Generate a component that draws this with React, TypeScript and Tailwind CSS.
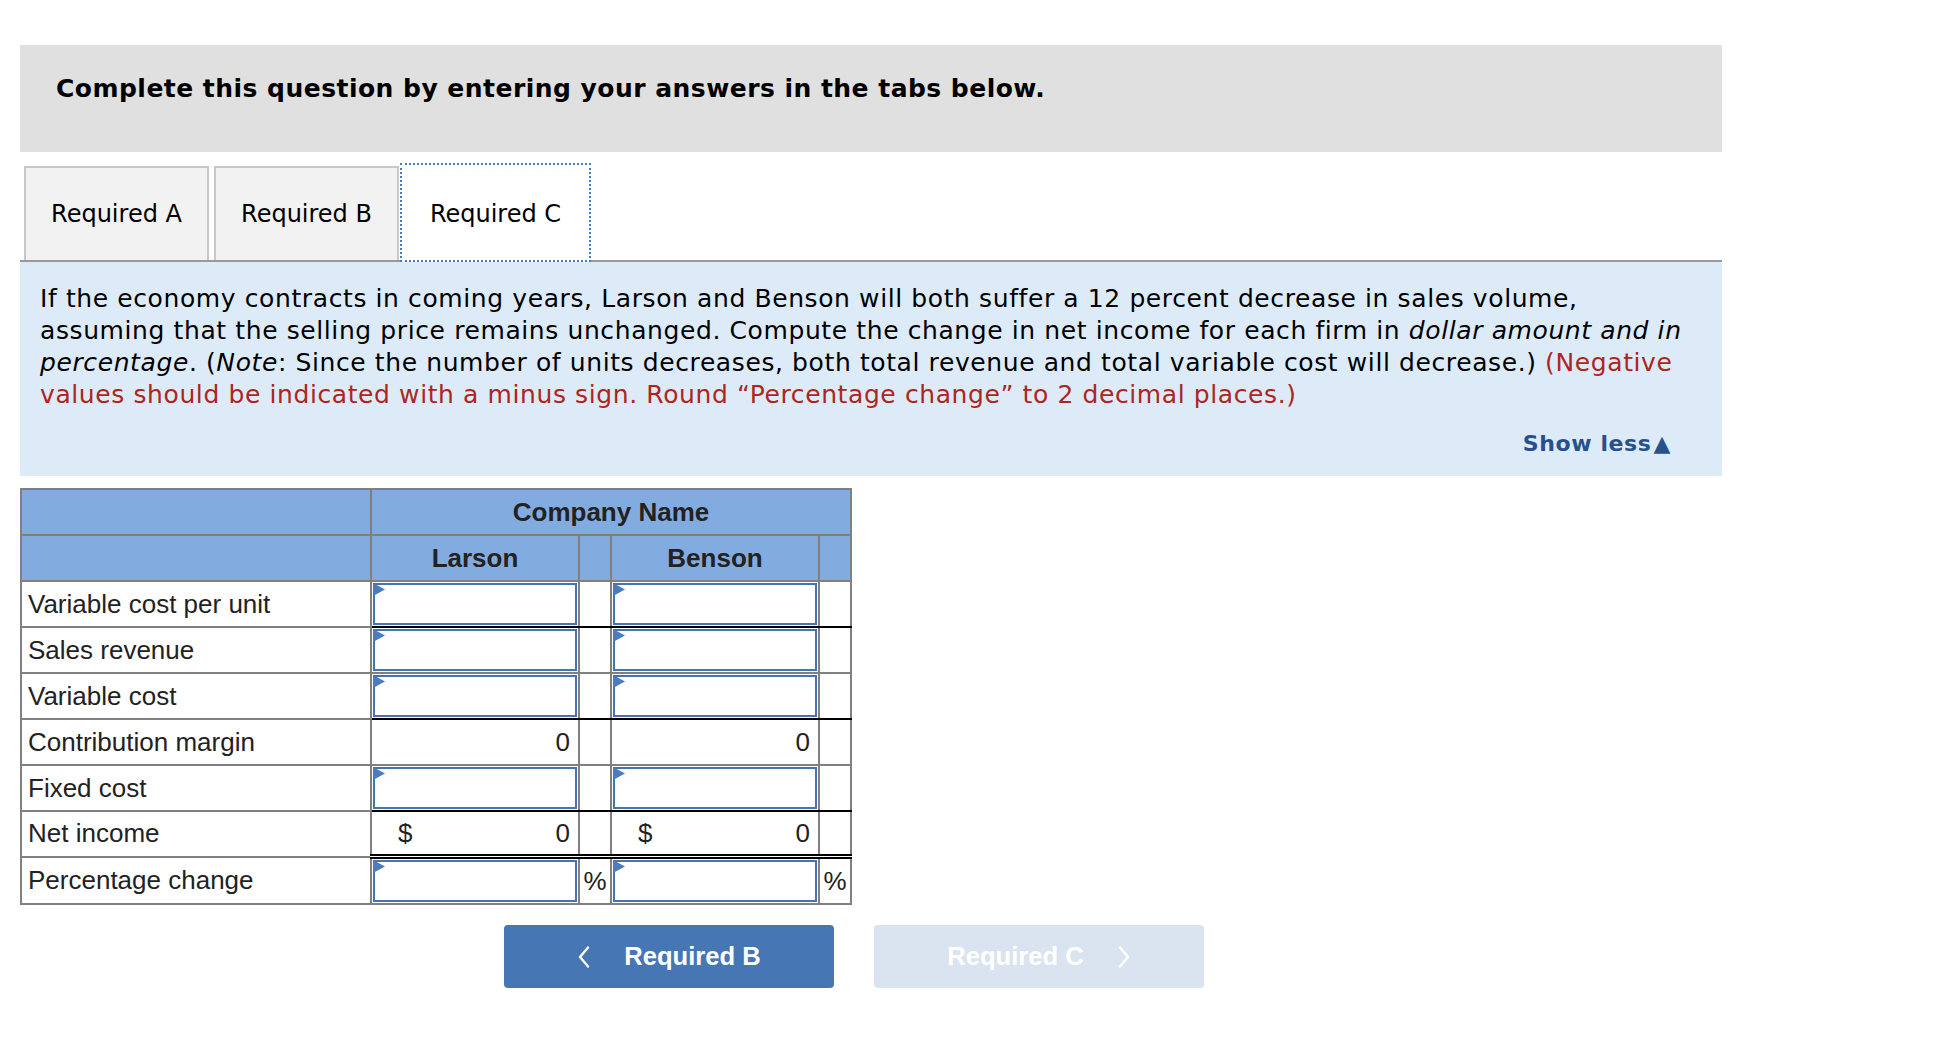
import React from "react";

type Row = {
  label: string;
  kind: "input" | "value" | "dollar";
  pct?: boolean;
  sep: "black" | "gray" | "double";
};

const rows: Row[] = [
  { label: "Variable cost per unit", kind: "input", sep: "black" },
  { label: "Sales revenue", kind: "input", sep: "gray" },
  { label: "Variable cost", kind: "input", sep: "black" },
  { label: "Contribution margin", kind: "value", sep: "gray" },
  { label: "Fixed cost", kind: "input", sep: "black" },
  { label: "Net income", kind: "dollar", sep: "double" },
  { label: "Percentage change", kind: "input", pct: true, sep: "gray" },
];

function InputBox() {
  return (
    <div className="relative h-[42px] border-2 border-[#4673b2] bg-white">
      <svg className="absolute -left-[2px] -top-[2px]" width="12" height="13" viewBox="0 0 12 13">
        <polygon points="0,0 12,6.5 0,13" fill="#4a7cc2" />
      </svg>
    </div>
  );
}

function sepClass(sep: Row["sep"]) {
  if (sep === "black") return "border-b-black";
  if (sep === "double") return "border-b-[5px] border-b-black [border-bottom-style:double]";
  return "";
}

function Chevron({ dir }: { dir: "left" | "right" }) {
  return (
    <svg width="14" height="22" viewBox="0 0 14 22" fill="none">
      <polyline
        points={dir === "left" ? "11,1.5 3,11 11,20.5" : "3,1.5 11,11 3,20.5"}
        stroke="white"
        strokeWidth="2.4"
        strokeLinecap="round"
        strokeLinejoin="round"
      />
    </svg>
  );
}

export default function App() {
  const td = "border-2 border-[#808080] p-0";

  return (
    <div className="min-h-screen bg-white pl-5 pt-[45px] font-['DejaVu_Sans',sans-serif] text-black">
      <div className="w-[1702px]">
        {/* header */}
        <div className="h-[107px] bg-[#e0e0e0] pl-[36px] pt-[28px]">
          <p className="text-[25px] font-bold leading-[32px] tracking-[0.47px]">
            Complete this question by entering your answers in the tabs below.
          </p>
        </div>

        {/* tabs */}
        <div className="mt-[14px] flex items-end border-b-2 border-[#999999] pl-[4px]">
          <div className="flex h-[94px] w-[185px] items-center justify-center border-2 border-b-0 border-[#c8c8c8] bg-[#f2f2f2] text-[24px]">
            Required A
          </div>
          <div className="ml-[5px] flex h-[94px] w-[185px] items-center justify-center border-2 border-b-0 border-[#c8c8c8] bg-[#f2f2f2] text-[24px]">
            Required B
          </div>
          <div className="relative -mb-[2px] -mt-[3px] ml-px flex h-[99px] w-[191px] items-center justify-center border-2 border-dotted border-[#4a78c2] bg-white pt-[3px] text-[24px]">
            Required C
          </div>
        </div>

        {/* instructions */}
        <div className="bg-[#ddebf8] pb-[16px] pl-[20px] pr-[30px] pt-[21px]">
          <p className="text-[25px] leading-[32px] tracking-[0.6px]">
            If the economy contracts in coming years, Larson and Benson will both suffer a 12 percent decrease in sales
            volume, assuming that the selling price remains unchanged. Compute the change in net income for each firm in{" "}
            <i>dollar amount and in percentage</i>. (<i>Note</i>: Since the number of units decreases, both total revenue
            and total variable cost will decrease.){" "}
            <span className="text-[#ae2520]">
              (Negative values should be indicated with a minus sign. Round “Percentage change” to 2 decimal places.)
            </span>
          </p>
          <div className="mt-[17px] flex justify-end pr-[21px]">
            <span className="text-[22px] font-bold leading-[32px] tracking-[0.6px] text-[#27508c]">
              Show less<span className="ml-[2px]">▲</span>
            </span>
          </div>
        </div>

        {/* table */}
        <table className="mt-[12px] w-[832px] table-fixed border-collapse font-['Liberation_Sans',Arial,sans-serif] text-[26px] text-[#222222]">
          <colgroup>
            <col className="w-[350px]" />
            <col className="w-[208px]" />
            <col className="w-[32px]" />
            <col className="w-[208px]" />
            <col className="w-[32px]" />
          </colgroup>
          <thead>
            <tr className="bg-[#82abdf]">
              <td className={td}>
                <div className="h-[44px]" />
              </td>
              <td className={td} colSpan={4}>
                <div className="flex h-[44px] items-center justify-center font-bold">Company Name</div>
              </td>
            </tr>
            <tr className="bg-[#82abdf]">
              <td className={td}>
                <div className="h-[44px]" />
              </td>
              <td className={td}>
                <div className="flex h-[44px] items-center justify-center font-bold">Larson</div>
              </td>
              <td className={td} />
              <td className={td}>
                <div className="flex h-[44px] items-center justify-center font-bold">Benson</div>
              </td>
              <td className={td} />
            </tr>
          </thead>
          <tbody>
            {rows.map((r) => {
              const sep = sepClass(r.sep);
              const h = r.sep === "double" ? "h-[42px]" : "h-[44px]";
              const valueCell = () => {
                if (r.kind === "input")
                  return (
                    <div className="p-px">
                      <InputBox />
                    </div>
                  );
                if (r.kind === "value")
                  return <div className={`flex ${h} items-center justify-end pr-[8px]`}>0</div>;
                return (
                  <div className={`flex ${h} items-center justify-between pl-[26px] pr-[8px]`}>
                    <span>$</span>
                    <span>0</span>
                  </div>
                );
              };
              return (
                <tr key={r.label} className="bg-white">
                  <td className={td}>
                    <div className={`flex ${h} items-center pl-[6px]`}>{r.label}</div>
                  </td>
                  <td className={`${td} ${sep}`}>{valueCell()}</td>
                  <td className={`${td} ${sep}`}>
                    {r.pct && <div className="flex h-[44px] items-center justify-center">%</div>}
                  </td>
                  <td className={`${td} ${sep}`}>{valueCell()}</td>
                  <td className={`${td} ${sep}`}>
                    {r.pct && <div className="flex h-[44px] items-center justify-center">%</div>}
                  </td>
                </tr>
              );
            })}
          </tbody>
        </table>

        {/* nav buttons */}
        <div className="mt-[20px] flex w-[1668px] justify-center gap-[40px] font-['Liberation_Sans',Arial,sans-serif] text-[25.6px] font-bold text-white">
          <div className="flex h-[63px] w-[330px] items-center justify-center gap-[33px] rounded-[4px] bg-[#4677b4]">
            <Chevron dir="left" />
            <span>Required B</span>
          </div>
          <div className="flex h-[63px] w-[330px] items-center justify-center gap-[33px] rounded-[4px] bg-[#dae3f0]">
            <span>Required C</span>
            <Chevron dir="right" />
          </div>
        </div>
      </div>
    </div>
  );
}
